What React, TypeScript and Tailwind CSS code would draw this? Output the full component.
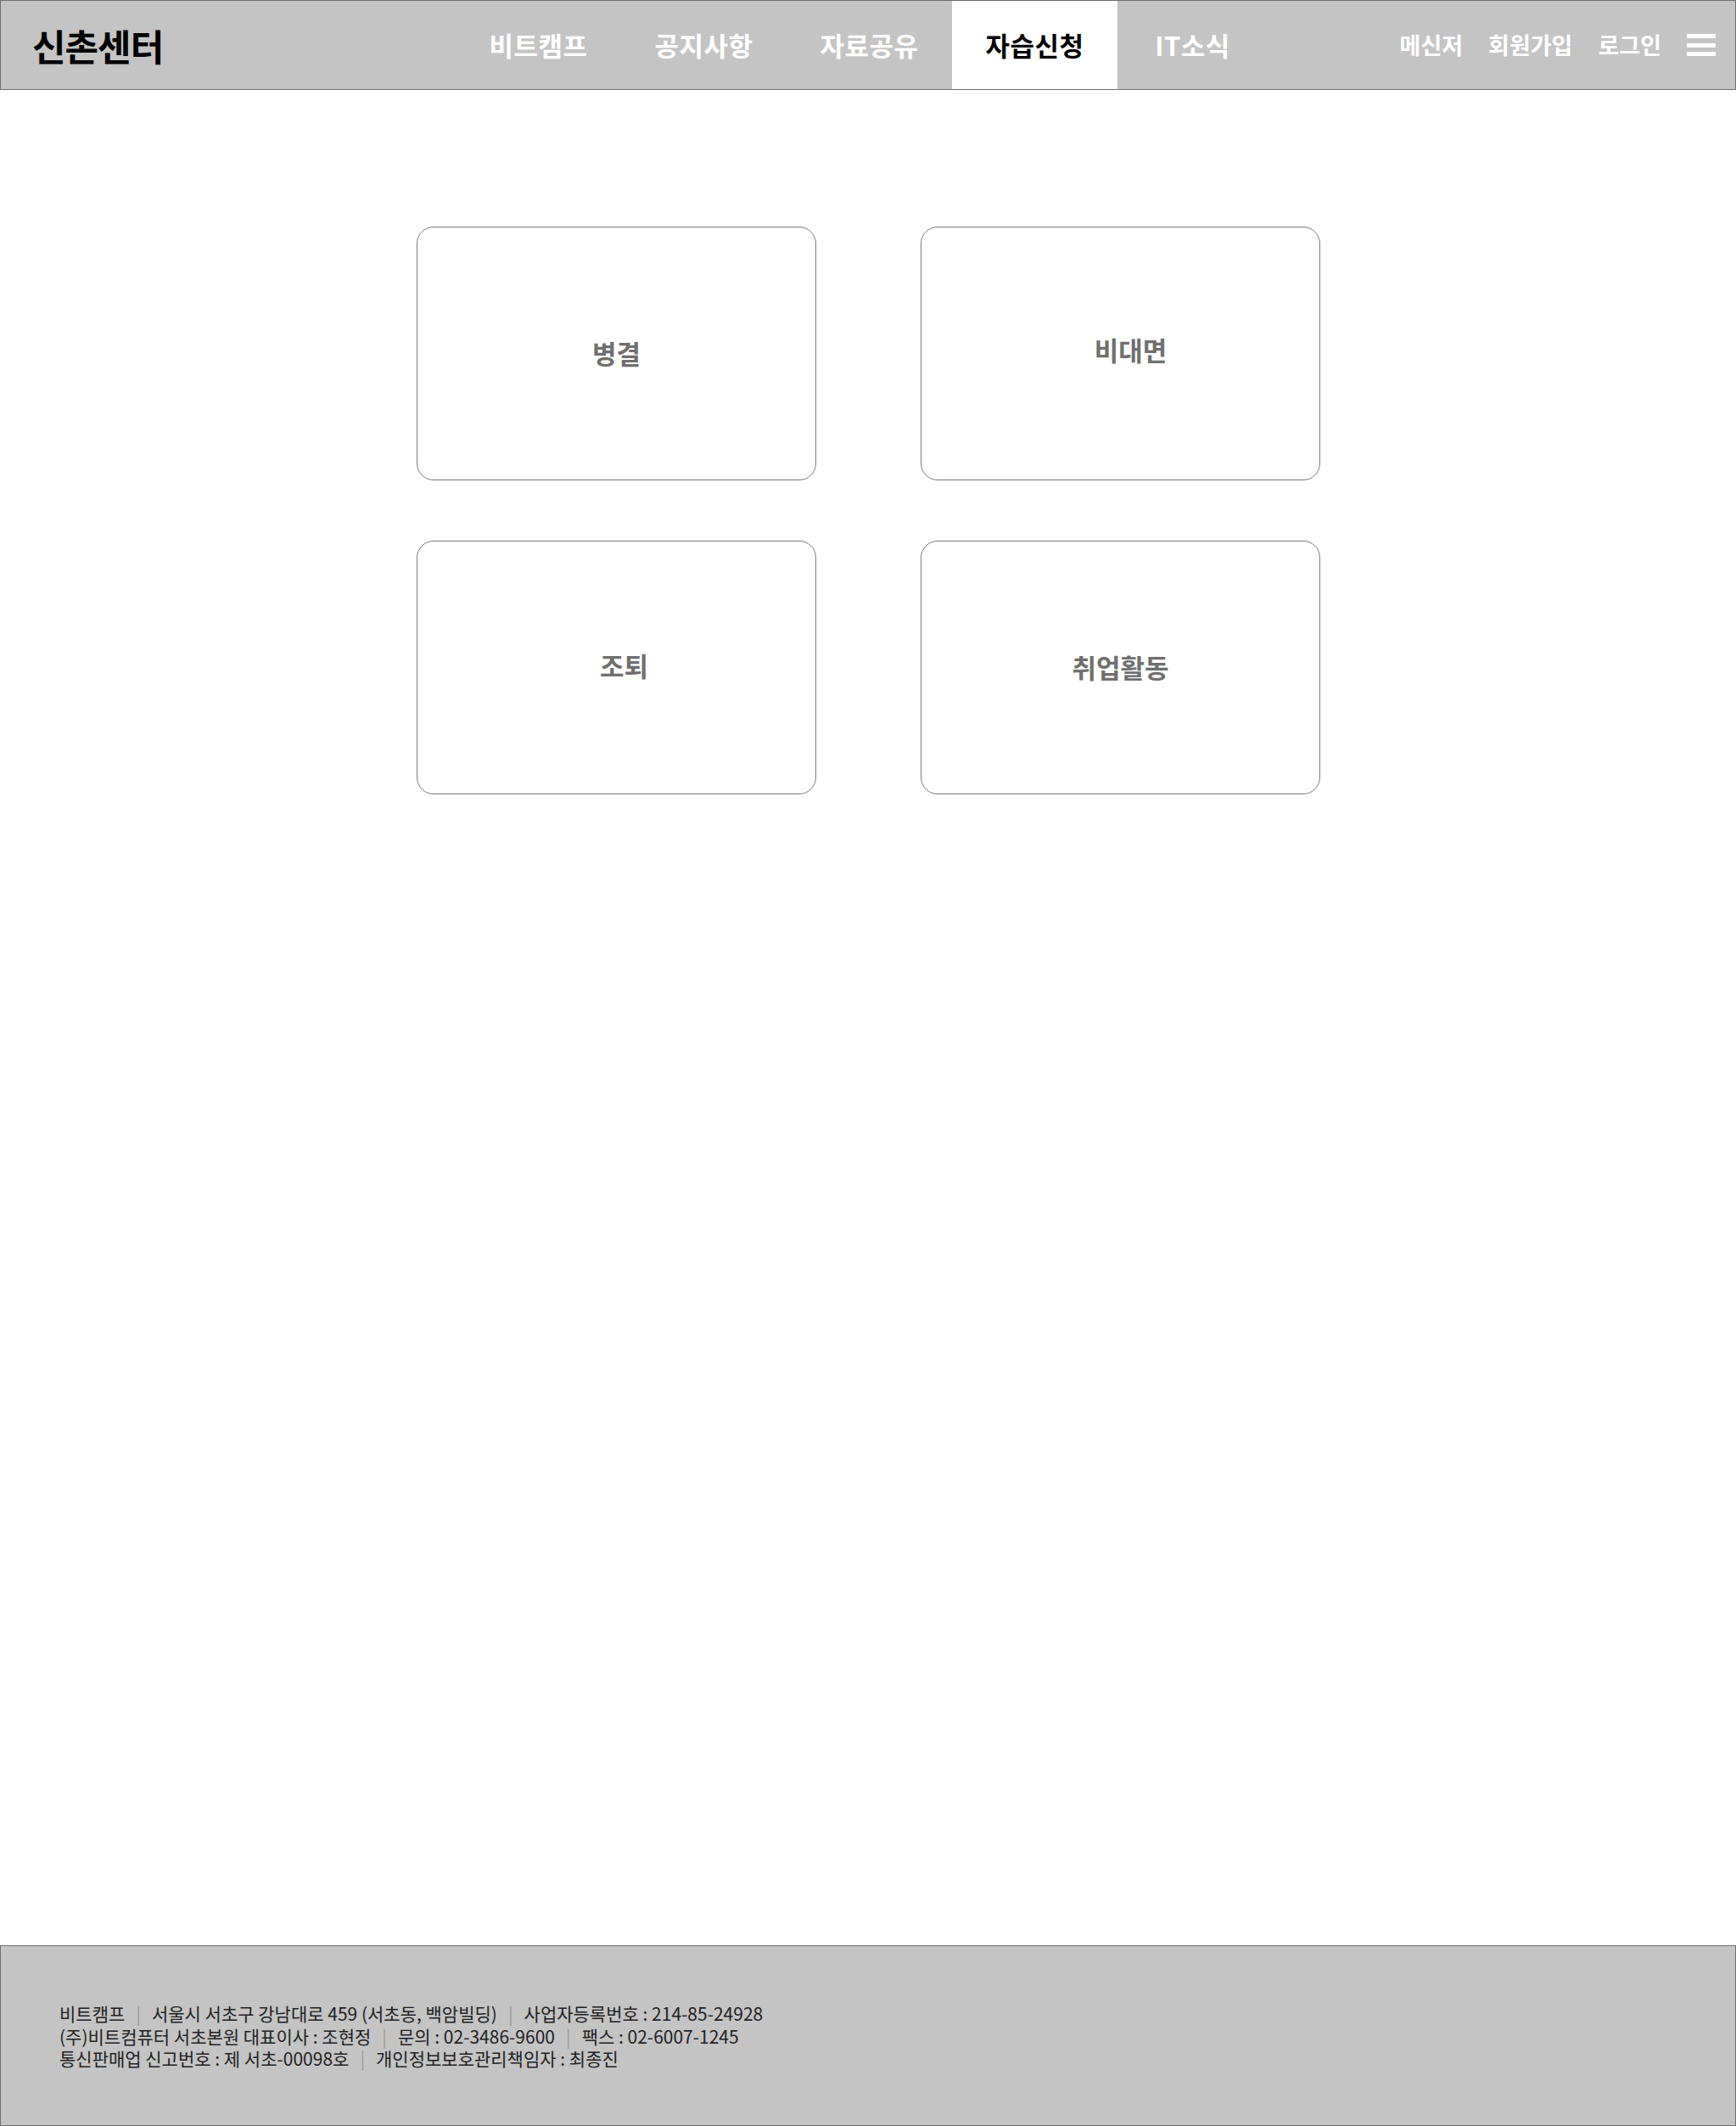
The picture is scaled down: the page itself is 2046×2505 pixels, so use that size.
const NAV = ["비트캠프", "공지사항", "자료공유", "자습신청", "IT소식"];
const ACTIVE = "자습신청";

const CARDS = [
  { label: "병결", shift: "" },
  { label: "비대면", shift: "pl-[24px] pb-[8px]" },
  { label: "조퇴", shift: "pl-[18px] pb-[4px]" },
  { label: "취업활동", shift: "" },
];

const FONT = "[font-family:'Noto_Sans_CJK_KR','Noto_Sans',sans-serif]";

function Sep() {
  return <span className="mx-[13px] text-[#9a9a9a]">|</span>;
}

function Header() {
  return (
    <header className="flex h-[106px] items-stretch border border-[#6f6f6f] bg-[#c4c4c4]">
      <div className="flex w-[536px] items-center pl-[37px]">
        <span className="text-[43px] font-bold leading-none tracking-[-1px] text-black">신촌센터</span>
      </div>

      {/* main tabs — 195px each */}
      <nav className="flex">
        {NAV.map((item) => {
          const active = item === ACTIVE;
          return (
            <div
              key={item}
              className={
                active
                  ? "flex w-[195px] items-center justify-center bg-white text-[31px] font-bold tracking-[0.5px] text-black"
                  : "flex w-[195px] items-center justify-center text-[31px] font-bold tracking-[0.5px] text-white"
              }
            >
              <span className={item === "IT소식" ? "-ml-[18px]" : ""}>{item}</span>
            </div>
          );
        })}
      </nav>

      <div className="flex-1" />

      <div className="flex items-center pr-[23px] text-[27px] font-bold text-white">
        <span>메신저</span>
        <span className="ml-[30px]">회원가입</span>
        <span className="ml-[30px]">로그인</span>
        <button className="ml-[30px] flex h-[26px] w-[34px] flex-col justify-between" aria-label="menu">
          <span className="h-[5px] w-full bg-white" />
          <span className="h-[5px] w-full bg-white" />
          <span className="h-[5px] w-full bg-white" />
        </button>
      </div>
    </header>
  );
}

function Footer() {
  return (
    <footer className="h-[213px] border border-[#6f6f6f] bg-[#c4c4c4] pl-[69px] pt-[66px] text-[21px] leading-[26.5px] text-[#222]">
      <p>
        비트캠프
        <Sep />
        서울시 서초구 강남대로 459 (서초동, 백암빌딩)
        <Sep />
        사업자등록번호 : 214-85-24928
      </p>
      <p>
        (주)비트컴퓨터 서초본원 대표이사 : 조현정
        <Sep />
        문의 : 02-3486-9600
        <Sep />
        팩스 : 02-6007-1245
      </p>
      <p>
        통신판매업 신고번호 : 제 서초-00098호
        <Sep />
        개인정보보호관리책임자 : 최종진
      </p>
    </footer>
  );
}

export default function App() {
  return (
    <div className={`flex min-h-[2505px] w-[2046px] flex-col bg-white ${FONT}`}>
      <Header />

      <main className="flex-1 pl-[491px] pt-[161px]">
        <div className="grid w-[1065px] grid-cols-[471px_471px] gap-x-[123px] gap-y-[71px]">
          {CARDS.map((c) => (
            <div
              key={c.label}
              className={`flex h-[299px] items-center justify-center rounded-[20px] border border-[#7a7a7a] bg-white text-[31px] font-bold text-[#6f6f6f] ${c.shift}`}
            >
              {c.label}
            </div>
          ))}
        </div>
      </main>

      <Footer />
    </div>
  );
}
